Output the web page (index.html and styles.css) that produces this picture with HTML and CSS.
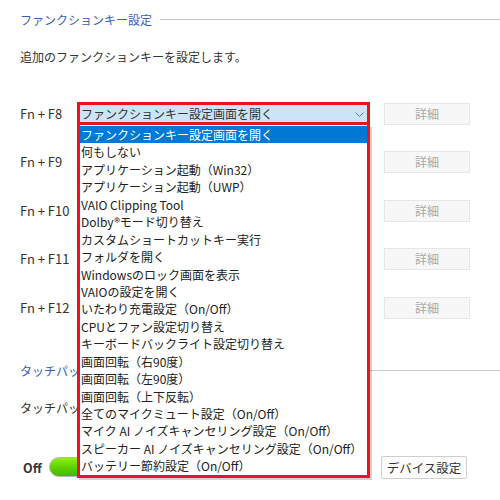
FILE: index.html
```html
<!DOCTYPE html>
<html lang="ja">
<head>
<meta charset="utf-8">
<title>ファンクションキー設定</title>
<link rel="stylesheet" href="styles.css">
</head>
<body>
<div class="page">
  <div class="section-head">
    <span class="section-title">ファンクションキー設定</span>
    <span class="rule"></span>
  </div>
  <p class="desc">追加のファンクションキーを設定します。</p>

  <div class="fn-list">
    <div class="fn-row">
      <span class="fn-label">Fn + F8</span>
      <div class="select-wrap">
        <div class="select open">
          <span class="select-text">ファンクションキー設定画面を開く</span>
          <svg class="chevron" width="9" height="5" viewBox="0 0 9 5"><path d="M0.5 0.5 L4.5 4.5 L8.5 0.5" fill="none" stroke="#777" stroke-width="1"/></svg>
        </div>
        <ul class="dropdown">
          <li class="selected">ファンクションキー設定画面を開く</li>
          <li>何もしない</li>
          <li>アプリケーション起動（Win32）</li>
          <li>アプリケーション起動（UWP）</li>
          <li>VAIO Clipping Tool</li>
          <li>Dolby®モード切り替え</li>
          <li>カスタムショートカットキー実行</li>
          <li>フォルダを開く</li>
          <li>Windowsのロック画面を表示</li>
          <li>VAIOの設定を開く</li>
          <li>いたわり充電設定（On/Off）</li>
          <li>CPUとファン設定切り替え</li>
          <li>キーボードバックライト設定切り替え</li>
          <li>画面回転（右90度）</li>
          <li>画面回転（左90度）</li>
          <li>画面回転（上下反転）</li>
          <li>全てのマイクミュート設定（On/Off）</li>
          <li>マイク AI ノイズキャンセリング設定（On/Off）</li>
          <li>スピーカー AI ノイズキャンセリング設定（On/Off）</li>
          <li>バッテリー節約設定（On/Off）</li>
        </ul>
      </div>
      <button class="detail">詳細</button>
    </div>
    <div class="fn-row">
      <span class="fn-label">Fn + F9</span>
      <div class="select-wrap"><div class="select"></div></div>
      <button class="detail">詳細</button>
    </div>
    <div class="fn-row">
      <span class="fn-label">Fn + F10</span>
      <div class="select-wrap"><div class="select"></div></div>
      <button class="detail">詳細</button>
    </div>
    <div class="fn-row">
      <span class="fn-label">Fn + F11</span>
      <div class="select-wrap"><div class="select"></div></div>
      <button class="detail">詳細</button>
    </div>
    <div class="fn-row">
      <span class="fn-label">Fn + F12</span>
      <div class="select-wrap"><div class="select"></div></div>
      <button class="detail">詳細</button>
    </div>
  </div>

  <div class="section-head second">
    <span class="section-title clipped">タッチパッド</span>
    <span class="rule"></span>
  </div>
  <p class="desc second-desc"><span class="clipped">タッチパッド</span></p>

  <div class="toggle-row">
    <span class="off-label">Off</span>
    <span class="toggle"></span>
    <button class="device">デバイス設定</button>
  </div>
</div>
</body>
</html>
```

FILE: styles.css
```css
html, body {
  margin: 0;
  padding: 0;
  background: #ffffff;
}

body {
  font-family: "Noto Sans CJK JP", "Noto Sans", sans-serif;
  font-size: 12px;
  color: #333333;
  width: 500px;
  height: 500px;
  overflow: hidden;
}

.page {
  padding: 12px 0 0 20px;
}

.section-head {
  display: flex;
  align-items: center;
  height: 16px;
}

.section-title {
  color: #3c5fb8;
  font-size: 12px;
  line-height: 16px;
  white-space: nowrap;
}

.clipped {
  display: inline-block;
  max-width: 57px;
  overflow: hidden;
  white-space: nowrap;
  vertical-align: top;
}

.rule {
  flex: 1;
  height: 0;
  border-top: 1px solid #c9c9c9;
  margin-left: 8px;
  margin-top: -1px;
}

.desc {
  margin: 21px 0 0 0;
  line-height: 16px;
  height: 16px;
}

.fn-list {
  margin-top: 37px;
  display: flex;
  flex-direction: column;
  gap: 25.5px;
}

.fn-row {
  display: flex;
  align-items: center;
  height: 23px;
}

.fn-label {
  width: 57px;
  font-size: 13px;
  line-height: 16px;
  color: #333333;
}

.select-wrap {
  position: relative;
  width: 293px;
  height: 23px;
}

.select {
  box-sizing: border-box;
  width: 293px;
  height: 23px;
  border: 1px solid #d0d0d0;
  background: #ffffff;
  display: flex;
  align-items: center;
  padding-left: 3px;
}

.select.open {
  border: 3px solid #e8141e;
  background: #cce4f7;
  padding-left: 1px;
  position: relative;
  z-index: 3;
}

.select-text {
  flex: 1;
  line-height: 16px;
  white-space: nowrap;
}

.chevron {
  margin-right: 3px;
  margin-top: 1px;
}

.dropdown {
  position: absolute;
  left: 0;
  top: 23px;
  z-index: 2;
  box-sizing: border-box;
  width: 293px;
  margin: 0;
  padding: 1px 0 0 0;
  list-style: none;
  background: #ffffff;
  border: 3px solid #e8141e;
  border-top: 0;
  box-shadow: 2px 2px 0 rgba(0, 0, 0, 0.18);
}

.dropdown li {
  height: 17.45px;
  line-height: 17px;
  padding-left: 1px;
  white-space: nowrap;
  overflow: hidden;
  color: #222222;
}

.dropdown li.selected {
  background: #0078d7;
  color: #ffffff;
}

.detail {
  margin-left: 14px;
  box-sizing: border-box;
  width: 86px;
  height: 22px;
  padding: 0;
  border: 1px solid #e6e6e6;
  background: #f7f7f7;
  color: #a8a8a8;
  font-family: inherit;
  font-size: 12px;
  line-height: 18px;
}

.section-head.second {
  margin-top: 44px;
}

.second-desc {
  margin-top: 21px;
}

.toggle-row {
  margin-top: 40px;
  display: flex;
  align-items: center;
  height: 22px;
  width: 447px;
}

.off-label {
  width: 29px;
  padding-left: 3px;
  box-sizing: border-box;
  font-weight: bold;
  font-size: 12.5px;
  color: #333333;
}

.toggle {
  box-sizing: border-box;
  width: 60px;
  height: 20px;
  border-radius: 10px;
  border: 1px solid #b8b8b8;
  background: linear-gradient(#8ef01a, #5cd000 55%, #48b800);
}

.device {
  margin-left: auto;
  box-sizing: border-box;
  width: 86px;
  height: 23px;
  padding: 0;
  border: 1px solid #cfcfcf;
  border-radius: 2px;
  background: #fdfdfd;
  color: #333333;
  font-family: inherit;
  font-size: 12.5px;
  line-height: 19px;
}
```
